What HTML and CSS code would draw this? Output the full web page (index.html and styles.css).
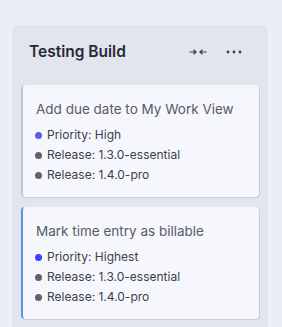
FILE: index.html
```html
<!DOCTYPE html>
<html>
<head>
<meta charset="utf-8">
<link rel="stylesheet" href="styles.css">
</head>
<body>
<div class="column">
  <div class="header">
    <span class="title">Testing Build</span>
    <div class="actions">
      <svg class="collapse" width="18" height="8" viewBox="0 0 18 8">
        <path d="M0.5 4H7M4.5 1.8L7 4L4.5 6.2" fill="none" stroke="#3a3d48" stroke-width="1.2"/>
        <path d="M17.5 4H11M13.5 1.8L11 4L13.5 6.2" fill="none" stroke="#3a3d48" stroke-width="1.2"/>
      </svg>
      <svg class="more" width="16" height="4" viewBox="0 0 16 4">
        <circle cx="2" cy="2" r="1.4" fill="#3a3d48"/>
        <circle cx="8" cy="2" r="1.4" fill="#3a3d48"/>
        <circle cx="14" cy="2" r="1.4" fill="#3a3d48"/>
      </svg>
    </div>
  </div>
  <div class="cards">
    <div class="card card-grey">
      <div class="card-title">Add due date to My Work View</div>
      <ul class="tags">
        <li><span class="dot dot-high"></span>Priority: High</li>
        <li><span class="dot"></span>Release: 1.3.0-essential</li>
        <li><span class="dot"></span>Release: 1.4.0-pro</li>
      </ul>
    </div>
    <div class="card card-blue">
      <div class="card-title">Mark time entry as billable</div>
      <ul class="tags">
        <li><span class="dot dot-highest"></span>Priority: Highest</li>
        <li><span class="dot"></span>Release: 1.3.0-essential</li>
        <li><span class="dot"></span>Release: 1.4.0-pro</li>
      </ul>
    </div>
  </div>
</div>
</body>
</html>
```
FILE: styles.css
```css
html, body {
  margin: 0;
  padding: 0;
  background: #eceef5;
  font-family: Inter, "Noto Sans", sans-serif;
  height: 327px;
  overflow: hidden;
}
.column {
  margin: 25px 14px 0 12px;
  background: #e2e4ee;
  border-radius: 7px 7px 0 0;
  height: 302px;
  overflow: hidden;
}
.header {
  display: flex;
  align-items: center;
  justify-content: space-between;
  padding: 17px 26px 0 17px;
  height: 20px;
  margin-bottom: 23px;
}
.title {
  font-size: 15.5px;
  font-weight: 600;
  color: #262a36;
  line-height: 20px;
}
.actions {
  display: flex;
  align-items: center;
  gap: 19px;
}
.collapse { display: block; }
.more { display: block; }
.cards {
  display: flex;
  flex-direction: column;
  gap: 10px;
  padding: 0 9px;
}
.card {
  background: #f5f7fd;
  border-radius: 4px;
  border-left: 2px solid #c3c4cc;
  box-shadow: 1px 1px 0 #c9cae6;
  padding: 14px 12px 12px 12px;
}
.card-blue { border-left-color: #5b93e8; }
.card-title {
  font-size: 13.5px;
  line-height: 20px;
  color: #575b67;
  margin-bottom: 6px;
  padding-left: 1px;
}
.tags {
  list-style: none;
  margin: 0;
  padding: 0;
}
.tags li {
  display: flex;
  align-items: center;
  gap: 5px;
  font-size: 12px;
  line-height: 20px;
  color: #3b3f4b;
}
.dot {
  width: 7px;
  height: 7px;
  border-radius: 50%;
  background: #5f6370;
  flex: none;
}
.dot-high { background: #5d5fe0; }
.dot-highest { background: #3843f2; }
```
